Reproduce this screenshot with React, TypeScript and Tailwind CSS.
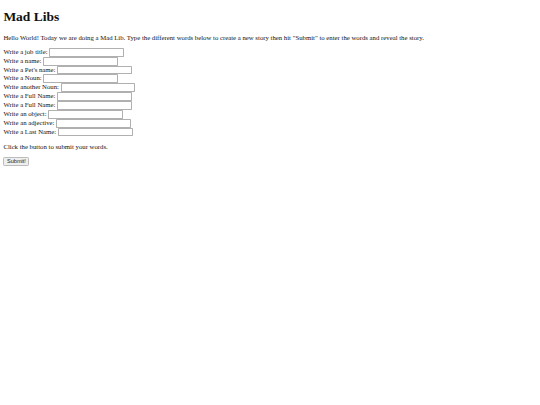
import React from "react";

const fields = [
  "Write a job title:",
  "Write a name:",
  "Write a Pet's name:",
  "Write a Noun:",
  "Write another Noun:",
  "Write a Full Name:",
  "Write a Full Name:",
  "Write an object:",
  "Write an adjective:",
  "Write a Last Name:",
];

export default function App() {
  return (
    <div className="min-h-[405px] bg-white">
      <div className="[zoom:0.421875] px-2 pt-[21.44px] font-['Liberation_Serif',serif] text-base leading-[normal] text-[#111]">
        <h1 className="mb-[21.44px] text-[32px] font-bold leading-[normal]">Mad Libs</h1>
        <p className="my-4">
          Hello World! Today we are doing a Mad Lib. Type the different words below to create a new story then hit "Submit" to enter the words and reveal the story.
        </p>
        <form>
          {fields.map((f, i) => (
            <React.Fragment key={i}>
              <label>{f}</label>{" "}
              <input
                type="text"
                className="h-[21px] w-[177px] rounded-[2px] border-2 border-[#b0b0b0] bg-white px-[2px] py-[1px] align-baseline font-['Liberation_Sans',Arial,sans-serif] text-[13.333px] leading-[normal]"
              />
              <br />
            </React.Fragment>
          ))}
        </form>
        <p className="my-4">Click the button to submit your words.</p>
        <button
          type="button"
          className="rounded-[3px] border-2 border-[#bcbcbc] bg-[#efefef] px-[6px] py-[1px] font-['Liberation_Sans',Arial,sans-serif] text-[13.333px] leading-[normal] text-[#222]"
        >
          Submit!
        </button>
      </div>
    </div>
  );
}
